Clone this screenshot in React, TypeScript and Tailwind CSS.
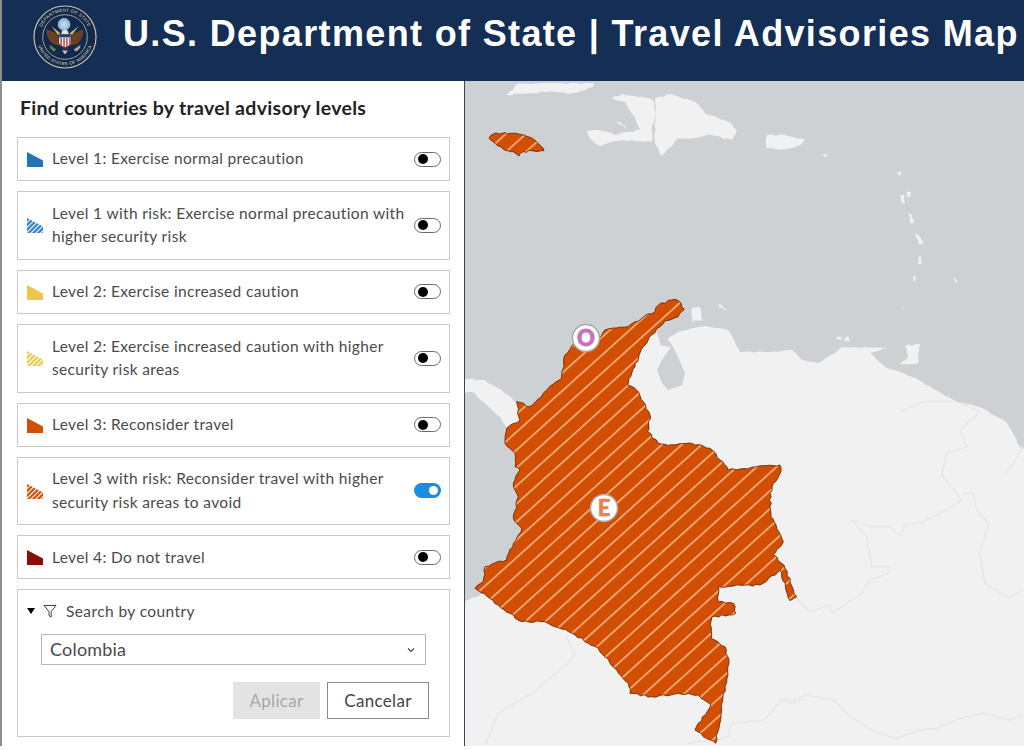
import { useId } from 'react';

const levels = [
  { label: 'Level 1: Exercise normal precaution', color: '#2272b4' },
  { label: 'Level 1 with risk: Exercise normal precaution with higher security risk', color: '#2f80c8', hatch: true },
  { label: 'Level 2: Exercise increased caution', color: '#eac94a' },
  { label: 'Level 2: Exercise increased caution with higher security risk areas', color: '#eac94a', hatch: true },
  { label: 'Level 3: Reconsider travel', color: '#d14f02' },
  { label: 'Level 3 with risk: Reconsider travel with higher security risk areas to avoid', color: '#d14f02', hatch: true, on: true },
  { label: 'Level 4: Do not travel', color: '#8b0e04' },
];

// map shapes, traced from crops (each group has its own scale below)
const colombia =
  '620,60 640,62 658,88 640,110 600,122 585,140 560,165 535,200 522,225 510,260 497,290 488,315 515,330 535,365 555,405 548,455 580,490 630,495 680,490 735,505 765,540 790,570 860,562 945,555 948,575 925,610 915,640 918,700 935,745 955,785 925,825 950,850 960,865 995,950 975,962 945,870 885,915 760,920 760,965 805,970 812,1000 740,1012 738,1075 780,1100 792,1150 780,1220 770,1290 752,1390 690,1350 738,1275 700,1245 640,1240 560,1250 495,1240 490,1210 450,1165 400,1105 330,1065 240,1025 170,1025 100,975 30,925 55,905 60,860 125,840 145,790 170,745 145,715 160,650 145,610 165,570 150,560 150,520 120,490 125,445 165,420 155,365 195,380 250,325 290,295 300,225 330,190 400,175 420,150 490,140 530,115 570,95 580,75';

const southAmerica =
  '460,603 480,595 520,560 560,400 640,340 655,328 660,343 678,332 705,326 728,330 740,352 765,352 792,350 802,360 818,363 835,353 840,348 888,347 870,353 885,367 912,377 922,382 957,402 980,407 1007,423 1020,447 1030,452 1030,760 460,760';

const panama = '-20,295 60,300 120,340 160,370 190,400 200,430 170,470 125,450 105,410 60,370 20,335 -20,335';
const maracaibo = '660,345 671,347 662,360 657,370 662,383 668,390 682,385 685,373 678,357 672,345 662,332';

const caribbean = [
  '125,45 160,10 385,10 385,20 320,40 230,35',
  '440,55 470,42 530,50 565,60 570,105 560,150 560,185 500,180 440,185 405,198 375,175 365,155 400,150 450,165 495,155 525,150 500,100 480,65',
  '570,55 620,42 690,65 720,100 790,125 815,150 800,180 740,165 680,175 640,175 590,228 570,190',
  '905,165 960,165 1020,178 1005,195 960,208 905,205',
  '1075,222 1088,224 1085,230 1075,229',
  '1305,345 1318,345 1320,370 1310,370',
  '1325,335 1338,335 1338,350 1325,350',
  '1330,402 1340,402 1346,430 1336,430',
  '1350,462 1365,470 1375,495 1360,490',
  '1360,530 1370,530 1370,552 1360,552',
  '1345,588 1354,588 1352,602 1345,602',
  '1465,592 1478,605 1470,608',
  '1298,275 1308,275 1308,285 1298,285',
  '1310,680 1316,680 1310,695',
  '680,685 705,682 712,722 682,725',
  '760,672 785,688 780,692 762,680',
  '1115,772 1130,772 1130,780 1115,780',
  '1138,775 1150,768 1156,782 1140,786',
  '1320,797 1365,793 1360,850 1305,852 1330,830',
  '455,125 485,138 480,142 458,130',
];

const jamaica =
  '72,175 85,162 120,158 160,162 195,172 215,186 237,212 200,212 168,218 162,228 145,215 115,208 85,185';

const borders = [
  '50,745 90,785 150,765 155,790 245,730 270,690 325,670 325,650 275,650 260,560 215,510 270,530 330,530 360,555 375,525 430,515 500,480 545,450 530,430 485,375 500,310 560,290 540,240 600,185',
  '545,430 580,430 590,480 625,520 600,610 615,700 685,745 729,720',
  '0,1050 40,1060 70,1035 160,1050 200,1090 280,1145 350,1165 420,1140 470,1135 540,1105 610,1090 690,1110 729,1095',
  '600,185 530,155 430,155 360,185',
  '729,290 700,340 675,370',
];

const southBorders = [
  '300,1065 330,1120 310,1150 200,1240 100,1300 60,1395',
  '670,1390 790,1370 800,1330 900,1320 950,1260 1020,1260',
  '1020,985 995,950',
];

// breaks a traced outline into small steps so coasts don't look ruled
function rough(points: string, amp: number, step: number) {
  const pts = points.split(' ').map((p) => p.split(',').map(Number));
  const out: string[] = [];
  let seed = 7;
  pts.forEach(([x, y], i) => {
    const [nx, ny] = pts[(i + 1) % pts.length];
    const len = Math.hypot(nx - x, ny - y);
    const n = Math.max(1, Math.ceil(len / step));
    for (let k = 0; k < n; k++) {
      seed = (seed * 31 + 11) % 101;
      const off = k === 0 ? 0 : ((seed / 100) * 2 - 1) * amp;
      const t = k / n;
      out.push(`${(x + (nx - x) * t - ((ny - y) / len) * off).toFixed(1)},${(y + (ny - y) * t + ((nx - x) / len) * off).toFixed(1)}`);
    }
  });
  return out.join(' ');
}

function LevelIcon({ color, hatch }: { color: string; hatch?: boolean }) {
  const id = useId();
  return (
    <svg width="16" height="16" viewBox="0 0 16 16" className="shrink-0">
      {hatch && (
        <defs>
          <pattern id={id} width="3.4" height="3.4" patternUnits="userSpaceOnUse" patternTransform="rotate(-45)">
            <rect width="3.4" height="3.4" fill={color} />
            <rect width="3.4" height="1.1" fill="#fff" />
          </pattern>
        </defs>
      )}
      <path d="M0 1 L16 9.5 V16 H0 Z" fill={hatch ? `url(#${id})` : color} />
    </svg>
  );
}

function Toggle({ on }: { on?: boolean }) {
  if (on) {
    return (
      <span className="flex h-[15px] w-[27px] shrink-0 items-center justify-end rounded-full bg-[#1b8ce3] pr-[3px]">
        <span className="h-[9px] w-[9px] rounded-full bg-white" />
      </span>
    );
  }
  return (
    <span className="flex h-[15px] w-[27px] shrink-0 items-center rounded-full border border-[#6a6a6a] bg-white pl-[3px]">
      <span className="h-[10px] w-[10px] rounded-full bg-black" />
    </span>
  );
}

function Seal() {
  return (
    <svg width="64" height="64" viewBox="0 0 66 66" className="shrink-0">
      <defs>
        <path id="sealTop" d="M7 33 A26 26 0 0 1 59 33" />
        <path id="sealBottom" d="M4 33 A29 29 0 0 0 62 33" />
      </defs>
      <circle cx="33" cy="33" r="32" fill="#14294a" stroke="#c9c7a4" strokeWidth="1.2" />
      <circle cx="33" cy="33" r="23" fill="#12284d" stroke="#c9c7a4" strokeWidth="0.8" />
      <text fontSize="4.6" fill="#d9dccf" fontFamily="'Liberation Sans', sans-serif" letterSpacing="0.3">
        <textPath href="#sealTop" startOffset="50%" textAnchor="middle">DEPARTMENT OF STATE</textPath>
      </text>
      <text fontSize="4.6" fill="#d9dccf" fontFamily="'Liberation Sans', sans-serif" letterSpacing="0.3">
        <textPath href="#sealBottom" startOffset="50%" textAnchor="middle">UNITED STATES OF AMERICA</textPath>
      </text>
      <circle cx="32" cy="20" r="6.5" fill="#8fbcd8" />
      <circle cx="32" cy="20" r="3.5" fill="#b9d6e6" />
      <path d="M14 25 L26 30 L27 42 L20 40 Q13 33 14 25 Z" fill="#6b3f22" />
      <path d="M52 25 L40 30 L39 42 L46 40 Q53 33 52 25 Z" fill="#6b3f22" />
      <path d="M19 22 L28 29 L26 31 Z M47 22 L38 29 L40 31 Z" fill="#d6b95a" />
      <path d="M30 27 Q33 24 36 27 L37 30 H29 Z" fill="#e9e4d2" />
      <path d="M27 30 H39 V40 Q33 47 27 40 Z" fill="#fff" />
      <path d="M27 30 H39 V33.5 H27 Z" fill="#24407a" />
      <path d="M29 34 V43 M32 34 V45 M35 34 V45 M38 34 V42" stroke="#b62c3a" strokeWidth="1.4" />
      <path d="M17 41 L24 46 L22 48 Q17 46 17 41 Z" fill="#4f8c4a" />
      <path d="M49 41 L42 46 L44 48 Q49 46 49 41 Z" fill="#a8a9a0" />
      <path d="M30 47 L33 51 L36 47 Z" fill="#c8c4ae" />
    </svg>
  );
}

function MapView() {
  return (
    <svg viewBox="465 81 559 665" className="h-full w-full" preserveAspectRatio="none">
      <defs>
        <pattern id="riskHatch" width="40" height="40" patternUnits="userSpaceOnUse" patternTransform="rotate(-42)">
          <rect width="40" height="40" fill="#d14e02" />
          <rect width="40" height="4.5" fill="#f6bd8e" />
        </pattern>
      </defs>
      <rect x="465" y="81" width="559" height="665" fill="#cdd1d3" />
      <polygon points={rough(southAmerica, 0.7, 5)} fill="#f1f1f1" />
      <polygon points={maracaibo} fill="#cdd1d3" />
      <g transform="translate(465 80) scale(0.3333)" fill="#f1f1f1">
        {caribbean.map((p) => (
          <polygon key={p} points={rough(p, 3, 14)} />
        ))}
        <polygon points={rough(jamaica, 3, 10)} fill="url(#riskHatch)" stroke="#7a3108" strokeWidth="3" />
      </g>
      <g transform="translate(465 280) scale(0.3333)">
        <polygon points={rough(panama, 3, 14)} fill="#f1f1f1" />
        <g fill="none" stroke="#e6e6e6" strokeWidth="4">
          {southBorders.map((p) => (
            <polyline key={p} points={p} />
          ))}
        </g>
        <polygon points={rough(colombia, 3.5, 12)} fill="url(#riskHatch)" stroke="#7a3108" strokeWidth="3" strokeLinejoin="round" />
      </g>
      <g transform="translate(780 350) scale(0.3333)" fill="none" stroke="#e6e6e6" strokeWidth="4">
        {borders.map((p) => (
          <polyline key={p} points={p} />
        ))}
      </g>
      <g fontFamily="Lato, sans-serif" fontWeight="900" textAnchor="middle">
        <circle cx="586" cy="338" r="13.5" fill="#fff" stroke="#a9a9a9" strokeWidth="1.5" />
        <text x="586" y="345.5" fontSize="22" fill="#c76fc0" stroke="#c76fc0" strokeWidth="0.8">O</text>
        <circle cx="604" cy="508" r="13.5" fill="#fff" stroke="#a9a9a9" strokeWidth="1.5" />
        <text x="604" y="515.5" fontSize="22" fill="#e8804f" stroke="#e8804f" strokeWidth="0.5">E</text>
      </g>
    </svg>
  );
}

export default function App() {
  return (
    <div className="h-[750px] w-[1024px] overflow-hidden bg-white font-['Lato',sans-serif] text-[#4a4a4a]">
      {/* Header */}
      <header className="flex h-[81px] items-center border-l-2 border-l-[#8d8d8d] bg-[#152e55] pb-[8px] pl-[31px]">
        <Seal />
        <h1 className="-mt-[6px] ml-[26px] whitespace-nowrap font-['Liberation_Sans',sans-serif] text-[36px] font-bold tracking-[1.35px] text-white">
          U.S. Department of State | Travel Advisories Map
        </h1>
      </header>

      <div className="flex h-[665px]">
        {/* Filter panel */}
        <aside className="flex w-[465px] shrink-0 flex-col border-r-[1.5px] border-l-2 border-r-[#3a4658] border-l-[#8d8d8d] bg-white pr-[14px] pl-[15px]">
          <h2 className="mt-[15px] mb-[17px] pl-[3px] text-[19.5px] leading-[24px] font-bold tracking-[0.3px] text-[#222]">
            Find countries by travel advisory levels
          </h2>
          <div className="flex flex-col gap-[10px]">
            {levels.map((level) => (
              <div
                key={level.label}
                className={`flex items-center border-[1.5px] border-[#c9c9c9] pr-[5px] pl-[9px] ${level.label.length > 40 ? 'h-[68.75px]' : 'h-[44px]'}`}
              >
                <LevelIcon color={level.color} hatch={level.hatch} />
                <span className="ml-[9px] w-[362px] pr-[4px] text-[15.5px] leading-[23.5px] tracking-[0.35px]">{level.label}</span>
                <Toggle on={level.on} />
              </div>
            ))}

            {/* Search by country */}
            <div className="h-[148px] border-[1.5px] border-[#c9c9c9] pt-[11px] pl-[9px]">
              <div className="flex h-[20px] items-center text-[15.5px] tracking-[0.4px]">
                <span className="h-0 w-0 border-x-[4px] border-t-[6px] border-x-transparent border-t-black" />
                <svg width="14" height="14" viewBox="0 0 14 14" fill="none" stroke="#444" strokeWidth="1" className="ml-[8px]">
                  <path d="M1 1.5 H13 L8.2 7.5 V13 L6 11.5 V7.5 Z" />
                </svg>
                <span className="ml-[9px]">Search by country</span>
              </div>
              <div className="mt-[13px] ml-[14px] flex h-[31px] w-[385px] items-center justify-between border border-[#b5b5b5] pr-[10px] pl-[8px] text-[18px] tracking-[0.2px]">
                <span>Colombia</span>
                <svg width="8" height="6" viewBox="0 0 8 6" fill="none" stroke="#444" strokeWidth="1.2">
                  <path d="M1 1.5 L4 4.5 L7 1.5" />
                </svg>
              </div>
              <div className="mt-[17px] ml-[206px] flex gap-[7px] text-[17px] tracking-[0.3px]">
                <button className="flex h-[37px] w-[87px] items-center justify-center bg-[#e3e3e3] text-[#a8a8a8]">Aplicar</button>
                <button className="flex h-[37px] w-[102px] items-center justify-center border border-[#8a8a8a] text-[#444]">Cancelar</button>
              </div>
            </div>
          </div>
        </aside>

        {/* Map */}
        <main className="min-w-0 flex-1">
          <MapView />
        </main>
      </div>
    </div>
  );
}
